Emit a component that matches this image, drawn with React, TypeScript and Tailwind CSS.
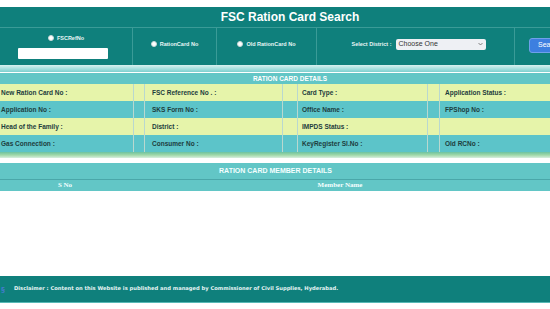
const rows: string[][] = [
  ['New Ration Card No :', 'FSC Reference No . :', 'Card Type :', 'Application Status :'],
  ['Application No :', 'SKS Form No :', 'Office Name :', 'FPShop No :'],
  ['Head of the Family :', 'District :', 'IMPDS Status :', ''],
  ['Gas Connection :', 'Consumer No :', 'KeyRegister Sl.No :', 'Old RCNo :'],
];

function Radio({ label }: { label: string }) {
  return (
    <span className="flex items-center gap-[3px] text-[5.5px] font-bold text-[#e8f6f6]">
      <span className="w-[6px] h-[6px] rounded-full bg-white border border-[#c8d8d8]" />
      {label}
    </span>
  );
}

export default function App() {
  return (
    <div className="w-[550px] h-[309px] bg-white overflow-hidden font-['Liberation_Sans',Arial,sans-serif]">
      <div className="h-[7px]" />

      {/* title */}
      <div className="h-[21px] bg-[#0f807c] flex items-center justify-center border-b border-[#3a9b97]">
        <span className="text-[12px] font-bold text-white ml-[30px]">FSC Ration Card Search</span>
      </div>

      {/* search row */}
      <div className="h-[37px] bg-[#0f807c] flex overflow-hidden">
        <div className="w-[133px] shrink-0 border-r border-[#3a9b97] flex flex-col items-center pt-[6px] gap-[6px]">
          <Radio label="FSCRefNo" />
          <div className="w-[90px] h-[11px] bg-white rounded-[1px] ml-[-6px]" />
        </div>
        <div className="w-[84px] shrink-0 border-r border-[#3a9b97] flex items-center justify-center pb-[5px]">
          <Radio label="RationCard No" />
        </div>
        <div className="w-[100px] shrink-0 border-r border-[#3a9b97] flex items-center justify-center pb-[5px]">
          <Radio label="Old RationCard No" />
        </div>
        <div className="w-[198px] shrink-0 border-r border-[#3a9b97] flex items-center justify-center gap-[4px] pb-[5px] pl-[6px]">
          <span className="text-[5.5px] font-bold text-[#e8f6f6]">Select District :</span>
          <div className="w-[90px] h-[11px] bg-[#eef0f4] rounded-[2px] flex items-center justify-between px-[3px]">
            <span className="text-[7px] text-[#333]">Choose One</span>
            <svg width="5" height="4" viewBox="0 0 5 4"><path d="M0.5 1 L2.5 3 L4.5 1" stroke="#666" strokeWidth="0.8" fill="none" /></svg>
          </div>
        </div>
        <div className="w-[60px] shrink-0 flex items-center pl-[14px] pb-[3px]">
          <div className="h-[15px] w-[40px] shrink-0 bg-[#3d7fe0] rounded-[3px] border border-[#6fa0ea] flex items-center pl-[8px]">
            <span className="text-[7px] text-white">Search</span>
          </div>
        </div>
      </div>

      {/* shadow */}
      <div className="h-[7px] bg-gradient-to-b from-[#d8f1f0] via-[#a9e2e0] to-[#7ccfcf]" />
      <div className="h-px bg-white" />

      {/* ration card details */}
      <div className="h-[11px] bg-[#62c6c6] flex items-center justify-center">
        <span className="text-[6.5px] font-bold text-white ml-[30px]">RATION CARD DETAILS</span>
      </div>
      {rows.map((r, i) => (
        <div
          key={i}
          className={`h-[17px] flex text-[6.5px] font-bold text-[#1d3d3d] ${i % 2 === 0 ? 'bg-[#e6f4aa]' : 'bg-[#5cc4c9]'}`}
        >
          <div className="w-[133px] flex items-center pl-px">{r[0]}</div>
          <div className="w-[12px] border-x border-[#b9d8cf]" />
          <div className="w-[137px] flex items-center pl-[7px]">{r[1]}</div>
          <div className="w-[16px] border-x border-[#b9d8cf]" />
          <div className="w-[129px] flex items-center pl-[4px]">{r[2]}</div>
          <div className="w-[13px] border-x border-[#b9d8cf]" />
          <div className="flex-1 flex items-center pl-[5px]">{r[3]}</div>
        </div>
      ))}
      <div className="h-[6px] bg-gradient-to-b from-[#6cc2a0] via-[#9fd8a8] to-[#d8efe0]" />
      <div className="h-[5px] bg-white" />

      {/* member details */}
      <div className="h-[17px] bg-[#62c6c6] flex items-center justify-center border-b border-[#4aa7a9]">
        <span className="text-[7px] font-bold text-[#f4ffff] ml-[1px]">RATION CARD MEMBER DETAILS</span>
      </div>
      <div className="h-[11px] bg-[#62c6c6] flex items-center text-[7px] font-bold text-[#f4ffff] font-['Liberation_Serif',serif]">
        <span className="w-[130px] text-center">S No</span>
        <span className="flex-1 text-center">Member Name</span>
      </div>

      <div className="h-[85px]" />

      {/* footer */}
      <div className="h-[27px] bg-[#0f807c] border-b border-[#57b9b6] flex items-center">
        <span className="text-[7px] font-bold text-[#4b7bd8] w-[14px] pl-px leading-none">§</span>
        <span className="text-[5.2px] font-bold text-[#e6f4f4] font-['DejaVu_Sans',Verdana,sans-serif]">
          Disclaimer : Content on this Website is published and managed by Commissioner of Civil Supplies, Hyderabad.
        </span>
      </div>
    </div>
  );
}
